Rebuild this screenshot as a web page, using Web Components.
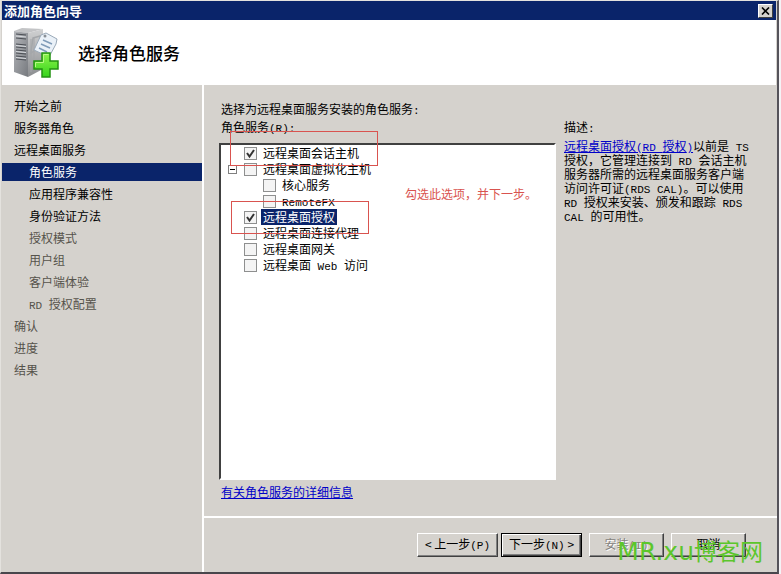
<!DOCTYPE html>
<html lang="zh-CN">
<head>
<meta charset="utf-8">
<title>添加角色向导</title>
<style>
  html, body {
    margin: 0;
    background: #f4f3f6;
  }

  body {
    --navy: #0a246a;
    --face: #d5d2cd;
    --shadow: #808080;
    --dark: #404040;
    --link: #0000c8;
    --mark: #d9534f;
    font: 12px/16px "Noto Sans CJK SC", sans-serif;
    color: #000;
  }

  small {
    font: 11px/0 "Liberation Mono", monospace;
    white-space: pre-wrap;
  }

  a {
    color: var(--link);
  }
</style>
</head>
<body>
<wizard-window caption="添加角色向导" heading="选择角色服务">
  <wizard-step slot="steps">开始之前</wizard-step>
  <wizard-step slot="steps">服务器角色</wizard-step>
  <wizard-step slot="steps">远程桌面服务</wizard-step>
  <wizard-step slot="steps" sub current>角色服务</wizard-step>
  <wizard-step slot="steps" sub>应用程序兼容性</wizard-step>
  <wizard-step slot="steps" sub>身份验证方法</wizard-step>
  <wizard-step slot="steps" sub pending>授权模式</wizard-step>
  <wizard-step slot="steps" sub pending>用户组</wizard-step>
  <wizard-step slot="steps" sub pending>客户端体验</wizard-step>
  <wizard-step slot="steps" sub pending><small>RD </small>授权配置</wizard-step>
  <wizard-step slot="steps" pending>确认</wizard-step>
  <wizard-step slot="steps" pending>进度</wizard-step>
  <wizard-step slot="steps" pending>结果</wizard-step>

  <role-page>
    <span slot="intro">选择为远程桌面服务安装的角色服务<small>:</small></span>
    <span slot="label">角色服务<small>(R):</small></span>
    <role-item checked>远程桌面会话主机</role-item>
    <role-item expanded>远程桌面虚拟化主机</role-item>
    <role-item sub>核心服务</role-item>
    <role-item sub><small>RemoteFX</small></role-item>
    <role-item checked selected>远程桌面授权</role-item>
    <role-item>远程桌面连接代理</role-item>
    <role-item>远程桌面网关</role-item>
    <role-item>远程桌面<small> Web </small>访问</role-item>
    <a slot="more" href="#details">有关角色服务的详细信息</a>
    <span slot="about-label">描述<small>:</small></span>
    <span slot="about"><a href="#licensing">远程桌面授权<small>(RD </small>授权<small>)</small></a>以前是<small> TS </small>授权，它管理连接到<small> RD </small>会话主机服务器所需的远程桌面服务客户端访问许可证<small>(RDS CAL)</small>。可以使用<small> RD </small>授权来安装、颁发和跟踪<small> RDS CAL </small>的可用性。</span>
  </role-page>

  <classic-button slot="actions" wide>&lt; 上一步<small>(P)</small></classic-button>
  <classic-button slot="actions" wide primary>下一步<small>(N)</small> &gt;</classic-button>
  <classic-button slot="actions" disabled>安装<small>(I)</small></classic-button>
  <classic-button slot="actions">取消</classic-button>
</wizard-window>

<script>
const windowTemplate = document.createElement("template");
windowTemplate.innerHTML = `
  <style>
    :host {
      display: flex;
      flex-direction: column;
      box-sizing: border-box;
      position: relative;
      min-height: 100vh;
      margin-right: 2px;
      background: var(--face);
      border: 1px solid #e4e2de;
      border-right: 2px solid #55535a;
      border-bottom: 2px solid #48464c;
    }

    .titlebar {
      display: flex;
      align-items: center;
      justify-content: space-between;
      height: 19px;
      margin: 0 1px;
      padding: 0 3px 0 2px;
      background: var(--navy);
      color: #fff;
      font-size: 13px;
      font-weight: 700;
    }

    .close {
      display: flex;
      align-items: center;
      justify-content: center;
      width: 15px;
      height: 14px;
      padding: 0;
      background: var(--face);
      border: 1px solid;
      border-color: #fff var(--dark) var(--dark) #fff;
    }

    header {
      display: flex;
      align-items: center;
      gap: 18px;
      height: 65px;
      padding-left: 10px;
      margin: 0 1px;
      background: #fff;
    }

    h1 {
      margin: 0;
      font-size: 17px;
      line-height: 24px;
      font-weight: 500;
    }

    .columns {
      display: flex;
      flex: 1;
    }

    nav {
      display: flex;
      flex-direction: column;
      gap: 4px;
      flex: 0 0 200px;
      padding: 12px 0 12px 1px;
      border-right: 2px solid #fff;
    }

    main {
      display: flex;
      flex-direction: column;
      flex: 1;
      min-width: 0;
    }

    .content {
      display: flex;
      flex: 1;
    }

    footer {
      display: flex;
      justify-content: flex-end;
      gap: 7px;
      padding: 15px 31px 15px 0;
      border-top: 2px solid #fff;
    }

    .watermark {
      position: absolute;
      right: 14px;
      bottom: 7px;
      color: #5cc62c;
      font-size: 23px;
      line-height: 30px;
      pointer-events: none;
    }

    .watermark span {
      font: 25px/0 "DejaVu Sans", sans-serif;
    }
  </style>
  <div class="titlebar">
    <span class="caption"></span>
    <button class="close" aria-label="关闭">
      <svg width="9" height="8" viewBox="0 0 9 8"><path d="M1 0.500L8 7.500M8 0.500L1 7.500" stroke="#000" stroke-width="1.600"/></svg>
    </button>
  </div>
  <header>
    <server-icon></server-icon>
    <h1></h1>
  </header>
  <div class="columns">
    <nav><slot name="steps"></slot></nav>
    <main>
      <div class="content"><slot></slot></div>
      <footer><slot name="actions"></slot></footer>
    </main>
  </div>
  <div class="watermark"><span>MR.xu</span>博客网</div>
`;

class WizardWindow extends HTMLElement {
  constructor() {
    super();
    this.attachShadow({ mode: "open" });
    this.shadowRoot.appendChild(windowTemplate.content.cloneNode(true));
  }

  connectedCallback() {
    this.shadowRoot.querySelector(".caption").textContent = this.getAttribute("caption");
    this.shadowRoot.querySelector("h1").textContent = this.getAttribute("heading");
  }
}

const iconTemplate = document.createElement("template");
iconTemplate.innerHTML = `
  <style>
    :host {
      display: block;
      width: 48px;
      height: 52px;
    }
  </style>
  <svg width="48" height="52" viewBox="0 0 48 52" aria-hidden="true">
    <defs>
      <linearGradient id="front" x1="0" y1="0" x2="1" y2="1">
        <stop offset="0" stop-color="#b4b6ba"/>
        <stop offset="1" stop-color="#777a7f"/>
      </linearGradient>
      <linearGradient id="side" x1="0" y1="0" x2="0" y2="1">
        <stop offset="0" stop-color="#d0d1d2"/>
        <stop offset="1" stop-color="#8b8d90"/>
      </linearGradient>
      <linearGradient id="plus" x1="0" y1="0" x2="0" y2="1">
        <stop offset="0" stop-color="#8df34c"/>
        <stop offset="1" stop-color="#35d41b"/>
      </linearGradient>
    </defs>
    <path d="M2 4L10 1L31 2L16 6Z" fill="#c3c4c6"/>
    <path d="M16 6L31 2V42L16 50Z" fill="url(#side)"/>
    <path d="M2 4L16 6V50L2 45Z" fill="url(#front)"/>
    <path d="M4 7L14 8M4 11L14 12M4 17L14 18M4 20L14 21M4 23L14 24M4 26L14 27M4 29L14 30M4 32L14 33" stroke="#4c5056" stroke-width="1.200"/>
    <path d="M4 9L14 10M4 18.500L14 19.500M4 24.500L14 25.500M4 30.500L14 31.500" stroke="#d7dade"/>
    <path d="M19 12V45M22 11V43" stroke="#a3a5a8"/>
    <path d="M21 11L28 9V14L22 24L19 26Z" fill="none" stroke="#a4a7aa" stroke-width="1.500"/>
    <path d="M29 8L34 6L45 12L44 17L37 30L22 23Z" fill="#eaf1f8" stroke="#9aa9b8"/>
    <path d="M31 13L40 17M29 17L38 21M27 21L35 25" stroke="#7f9bb8" stroke-width="1.500"/>
    <circle cx="33" cy="9" r="1.500" fill="#8a9097"/>
    <path d="M30 26H38V34H46V42H38V50H30V42H22V34H30Z" fill="url(#plus)" stroke="#239312" stroke-width="1.500"/>
    <path d="M31.500 35.500V27.500H36.500M23.500 40V35.500H31.500" fill="none" stroke="#b9fa86"/>
  </svg>
`;

class ServerIcon extends HTMLElement {
  constructor() {
    super();
    this.attachShadow({ mode: "open" });
    this.shadowRoot.appendChild(iconTemplate.content.cloneNode(true));
  }
}

const stepTemplate = document.createElement("template");
stepTemplate.innerHTML = `
  <style>
    :host {
      display: block;
      padding-left: 12px;
      line-height: 18px;
    }

    :host([sub]) {
      padding-left: 27px;
    }

    :host([current]) {
      background: var(--navy);
      color: #fff;
    }

    :host([pending]) {
      color: #55534b;
    }
  </style>
  <slot></slot>
`;

class WizardStep extends HTMLElement {
  constructor() {
    super();
    this.attachShadow({ mode: "open" });
    this.shadowRoot.appendChild(stepTemplate.content.cloneNode(true));
  }
}

const pageTemplate = document.createElement("template");
pageTemplate.innerHTML = `
  <style>
    :host {
      display: flex;
      flex-direction: column;
      flex: 1;
      min-width: 0;
      padding: 15px 25px 16px 15px;
    }

    .intro {
      padding-left: 2px;
      line-height: 18px;
    }

    .split {
      display: flex;
      flex: 1;
      gap: 8px;
    }

    .left {
      display: flex;
      flex-direction: column;
      flex: 1;
    }

    .label {
      padding-left: 2px;
      line-height: 18px;
      margin-bottom: 7px;
    }

    .list {
      position: relative;
      flex: 1;
      background: #fff;
      border: 2px solid;
      border-color: var(--dark) #fff #fff var(--dark);
    }

    .more {
      padding: 4px 0 0 2px;
    }

    .right {
      flex: 0 0 188px;
    }

    .right .label {
      margin-bottom: 3px;
      padding: 0;
    }

    .about {
      line-height: 14px;
    }

    /* hand-drawn markup over the tree */
    .frame {
      position: absolute;
      box-sizing: border-box;
      border: 1px solid var(--mark);
      pointer-events: none;
    }

    .first {
      left: 9px;
      top: -14px;
      width: 148px;
      height: 35px;
    }

    .second {
      left: 10px;
      top: 56px;
      width: 138px;
      height: 33px;
    }

    .note {
      position: absolute;
      left: 184px;
      top: 41px;
      color: var(--mark);
      white-space: nowrap;
    }
  </style>
  <div class="intro"><slot name="intro"></slot></div>
  <div class="split">
    <div class="left">
      <div class="label"><slot name="label"></slot></div>
      <div class="list">
        <slot></slot>
        <div class="frame first"></div>
        <div class="frame second"></div>
        <div class="note">勾选此选项，并下一步。</div>
      </div>
      <div class="more"><slot name="more"></slot></div>
    </div>
    <div class="right">
      <div class="label"><slot name="about-label"></slot></div>
      <div class="about"><slot name="about"></slot></div>
    </div>
  </div>
`;

class RolePage extends HTMLElement {
  constructor() {
    super();
    this.attachShadow({ mode: "open" });
    this.shadowRoot.appendChild(pageTemplate.content.cloneNode(true));
  }
}

const itemTemplate = document.createElement("template");
itemTemplate.innerHTML = `
  <style>
    :host {
      display: flex;
      align-items: center;
      height: 16px;
      padding-left: 7px;
    }

    :host([sub]) {
      padding-left: 26px;
    }

    .toggle {
      width: 9px;
      height: 9px;
      margin-right: 7px;
      padding: 0;
      border: 1px solid var(--shadow);
      background: linear-gradient(#000, #000) center / 5px 1px no-repeat #fff;
      visibility: hidden;
    }

    :host([expanded]) .toggle {
      visibility: visible;
    }

    input {
      appearance: none;
      flex: none;
      width: 13px;
      height: 13px;
      margin: 0 4px 0 0;
      border: 1px solid #8e8f8f;
      background: #f4f4f4;
    }

    input:checked {
      background: url("data:image/svg+xml,%3Csvg xmlns='http://www.w3.org/2000/svg' viewBox='0 0 11 11'%3E%3Cpath d='M2 5L4.500 8.500L9 2' fill='none' stroke='%23333' stroke-width='2'/%3E%3C/svg%3E") #f4f4f4;
    }

    label {
      padding: 0 2px;
      line-height: 16px;
      white-space: nowrap;
    }

    :host([selected]) label {
      background: var(--navy);
      color: #fff;
    }
  </style>
  <button class="toggle" aria-label="折叠"></button>
  <input type="checkbox" id="box">
  <label for="box"><slot></slot></label>
`;

class RoleItem extends HTMLElement {
  constructor() {
    super();
    this.attachShadow({ mode: "open" });
    this.shadowRoot.appendChild(itemTemplate.content.cloneNode(true));
  }

  connectedCallback() {
    this.shadowRoot.querySelector("input").checked = this.hasAttribute("checked");
    if (!this.hasAttribute("expanded")) {
      this.shadowRoot.querySelector(".toggle").disabled = true;
    }
  }
}

const buttonTemplate = document.createElement("template");
buttonTemplate.innerHTML = `
  <style>
    :host {
      display: block;
    }

    :host([primary]) {
      margin-left: -4px;
    }

    button {
      box-sizing: border-box;
      width: 75px;
      height: 24px;
      padding: 0 0 2px;
      background: var(--face);
      border: 1px solid;
      border-color: #fff var(--dark) var(--dark) #fff;
      box-shadow: inset -1px -1px var(--shadow);
      color: #000;
      font: inherit;
      white-space: nowrap;
    }

    :host([wide]) button {
      width: 81px;
    }

    :host([primary]) button {
      border-color: #000;
      box-shadow: inset 1px 1px #fff, inset -1px -1px var(--dark), inset -2px -2px var(--shadow);
    }

    button:disabled {
      color: #85827e;
      text-shadow: 1px 1px #fff;
    }
  </style>
  <button type="button"><slot></slot></button>
`;

class ClassicButton extends HTMLElement {
  constructor() {
    super();
    this.attachShadow({ mode: "open" });
    this.shadowRoot.appendChild(buttonTemplate.content.cloneNode(true));
  }

  connectedCallback() {
    this.shadowRoot.querySelector("button").disabled = this.hasAttribute("disabled");
  }
}

customElements.define("server-icon", ServerIcon);
customElements.define("wizard-step", WizardStep);
customElements.define("role-item", RoleItem);
customElements.define("role-page", RolePage);
customElements.define("classic-button", ClassicButton);
customElements.define("wizard-window", WizardWindow);
</script>
</body>
</html>
